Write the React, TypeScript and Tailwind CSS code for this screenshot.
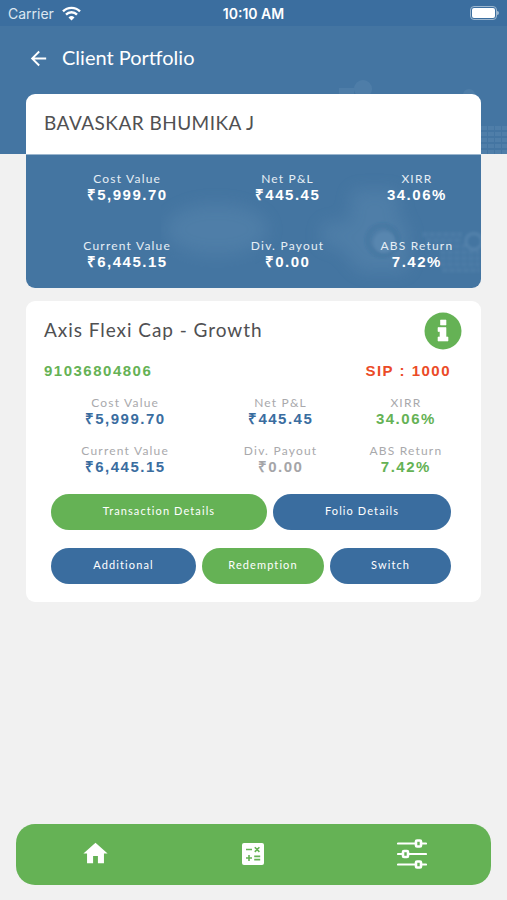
import type { ReactNode } from "react";
import { MdArrowBack, MdHome } from "react-icons/md";

type Metric = { label: string; value: string; tone?: string };

const summary: Metric[] = [
  { label: "Cost Value", value: "₹5,999.70" },
  { label: "Net P&L", value: "₹445.45" },
  { label: "XIRR", value: "34.06%" },
  { label: "Current Value", value: "₹6,445.15" },
  { label: "Div. Payout", value: "₹0.00" },
  { label: "ABS Return", value: "7.42%" },
];

const holding: Metric[] = [
  { label: "Cost Value", value: "₹5,999.70", tone: "text-[#3a6d9f]" },
  { label: "Net P&L", value: "₹445.45", tone: "text-[#3a6d9f]" },
  { label: "XIRR", value: "34.06%", tone: "text-[#65b255]" },
  { label: "Current Value", value: "₹6,445.15", tone: "text-[#3a6d9f]" },
  { label: "Div. Payout", value: "₹0.00", tone: "text-[#a5a5a8]" },
  { label: "ABS Return", value: "7.42%", tone: "text-[#65b255]" },
];

function MetricCell({ label, value, labelTone, valueTone }: { label: string; value: string; labelTone: string; valueTone: string }) {
  return (
    <div className="flex flex-col items-center whitespace-nowrap">
      <dt className={`text-[12px] leading-4 tracking-widest ${labelTone}`}>{label}</dt>
      <dd className={`font-['Liberation_Sans',sans-serif] text-[15px] leading-4 font-bold tracking-widest ${valueTone}`}>{value}</dd>
    </div>
  );
}

function Pill({ children, tone }: { children: ReactNode; tone: string }) {
  return (
    <button type="button" className={`h-9 rounded-full pb-0.5 text-[11px] tracking-widest whitespace-nowrap text-white ${tone}`}>
      {children}
    </button>
  );
}

function HeaderPattern() {
  return (
    <svg className="absolute top-0 right-0 h-full" width="254" height="128" viewBox="0 0 254 128" aria-hidden="true">
      <g fill="#8ab0cf" opacity="0.14">
        <circle cx="110" cy="63" r="9" />
        <path d="M86 62h15v8H86z" />
        <circle cx="216" cy="69" r="6" />
      </g>
      <g stroke="#8ab0cf" strokeWidth="4" strokeDasharray="6 1" opacity="0.16">
        <path d="M228 102h26M228 108h26M228 114h26M228 120h26M228 126h26" />
      </g>
    </svg>
  );
}

function SummaryPattern() {
  return (
    <svg className="absolute inset-y-0 right-0 h-full" width="320" height="134" viewBox="0 0 320 134" aria-hidden="true">
      <defs>
        <filter id="haze" x="-40%" y="-60%" width="180%" height="220%">
          <feGaussianBlur stdDeviation="9" />
        </filter>
        <filter id="soft" x="-20%" y="-20%" width="140%" height="140%">
          <feGaussianBlur stdDeviation="1" />
        </filter>
      </defs>
      <g fill="#8ab0cf" opacity="0.16" filter="url(#haze)">
        <ellipse cx="55" cy="75" rx="52" ry="26" />
        <path d="M160 68h88v50h-50l-20 -26h-18zM190 35h48v35h-48z" />
      </g>
      <g filter="url(#soft)">
        <circle cx="222" cy="86" r="15" fill="none" stroke="#2f648f" strokeWidth="6" opacity="0.18" />
        <circle cx="224" cy="88" r="11" fill="#9fc0da" opacity="0.12" />
        <g stroke="#8ab0cf" strokeWidth="5" strokeDasharray="6 1" opacity="0.1">
          <path d="M262 80h40M266 86h36M266 92h40M280 98h40M280 104h40M280 110h40M282 116h38" />
        </g>
        <circle cx="314" cy="87" r="8" fill="none" stroke="#9fc0da" strokeWidth="4" opacity="0.14" />
      </g>
    </svg>
  );
}

function WifiIcon() {
  return (
    <svg width="19" height="15" viewBox="0 0 19 15" fill="none" stroke="#fff" strokeWidth="2.400" aria-hidden="true">
      <path d="M1 5.400a12 12 0 0 1 17 0M4 8.600a7.700 7.700 0 0 1 11 0" />
      <path d="M9.500 14.500l-3 -3.100a4.300 4.300 0 0 1 6 0z" fill="#fff" stroke="none" />
    </svg>
  );
}

function InfoIcon() {
  return (
    <svg width="38" height="38" viewBox="0 0 38 38" aria-hidden="true">
      <circle cx="19" cy="19" r="18.500" fill="#65b255" />
      <path d="M16.500 8h5.500v5h-5.500zM14 15.500h8v9.500h2v4H14v-4h2v-5.500h-2z" fill="#fff" stroke="#fff" strokeWidth="0.600" strokeLinejoin="round" />
    </svg>
  );
}

function CalculatorIcon() {
  return (
    <svg width="24" height="24" viewBox="0 0 24 24" aria-hidden="true">
      <rect x="1" y="1" width="22" height="22" rx="2" fill="#fff" />
      <path d="M5 7.500h6M13.800 5.300l4.600 4.600M18.400 5.300l-4.600 4.600M5 16h6M8 13v6M13.200 14.400h6M13.200 17.600h6" stroke="#65b255" strokeWidth="1.600" />
    </svg>
  );
}

function SlidersIcon() {
  return (
    <svg width="30" height="30" viewBox="0 0 30 30" fill="none" stroke="#fff" aria-hidden="true">
      <path d="M1 4.500h17M25 4.500h4M1 15h4M12 15h17M1 25.500h17M25 25.500h4" strokeWidth="2.200" strokeLinecap="round" />
      <g strokeWidth="2.600">
        <rect x="19" y="1.500" width="5" height="6" rx="1" />
        <rect x="6" y="12" width="5" height="6" rx="1" />
        <rect x="19" y="22.500" width="5" height="6" rx="1" />
      </g>
    </svg>
  );
}

export default function App() {
  return (
    <div className="flex min-h-screen flex-col bg-[#f1f1f1] font-[Lato,sans-serif]">
      <div className="grid h-[26px] grid-cols-3 items-center bg-[#3b6e9f] px-2 font-[Inter,sans-serif] text-[14px] text-white">
        <div className="flex items-center gap-2 text-[#dce7f1]">
          <span>Carrier</span>
          <WifiIcon />
        </div>
        <time className="text-center font-semibold">10:10 AM</time>
        <div className="flex items-center justify-self-end" role="img" aria-label="Battery full">
          <span className="h-[14px] w-[27px] rounded-[4px] border border-[#9db7cf] p-px">
            <span className="block h-full rounded-[2px] bg-white" />
          </span>
          <span className="h-1 w-0.5 rounded-r bg-[#9db7cf]" />
        </div>
      </div>

      <header className="relative bg-[#4475a2]">
        <HeaderPattern />
        <div className="relative flex h-[68px] items-center gap-3 px-[27px] pb-1.5 text-white">
          <button type="button" aria-label="Back" className="pt-0.5">
            <MdArrowBack size={23} />
          </button>
          <h1 className="text-[20px] leading-6">Client Portfolio</h1>
        </div>
        <div className="relative mx-[26px] h-[60px] rounded-t-[9px] bg-white px-[18px] pt-[15px]">
          <h2 className="text-[19px] leading-7 tracking-wide text-[#505052]">BAVASKAR BHUMIKA J</h2>
        </div>
      </header>

      <main className="flex-1 px-[26px] pb-5">
        <section className="relative overflow-hidden rounded-b-[9px] border-t border-[#9bb6ce] bg-[#4475a1]">
          <SummaryPattern />
          <dl className="relative grid grid-cols-[162fr_158fr_100fr] gap-y-[35px] pt-4 pr-[14px] pb-[18px] pl-5">
            {summary.map((m) => (
              <MetricCell key={m.label} label={m.label} value={m.value} labelTone="text-[#e6eef5]" valueTone="text-white" />
            ))}
          </dl>
        </section>

        <section className="mt-[13px] rounded-[9px] bg-white pb-[18px]">
          <div className="flex items-center justify-between pt-[11px] pr-[19px] pl-[18px]">
            <h2 className="pb-0.5 text-[19px] leading-7 tracking-wider text-[#505052]">Axis Flexi Cap - Growth</h2>
            <button type="button" aria-label="Scheme information">
              <InfoIcon />
            </button>
          </div>
          <div className="flex justify-between pt-[11px] pr-[30px] pl-[18px] font-['Liberation_Sans',sans-serif] text-[15px] leading-5 font-bold tracking-widest">
            <span className="text-[#65b255]">91036804806</span>
            <span className="text-[#eb4b27]">SIP : 1000</span>
          </div>
          <dl className="grid grid-cols-[162fr_148fr_102fr] gap-y-4 pt-[14px] pr-6 pl-[18px]">
            {holding.map((m) => (
              <MetricCell key={m.label} label={m.label} value={m.value} labelTone="text-[#a9a9ac]" valueTone={m.tone ?? ""} />
            ))}
          </dl>
          <div className="mt-[19px] grid grid-cols-[216fr_178fr] gap-1.5 pr-[30px] pl-[25px]">
            <Pill tone="bg-[#65b255]">Transaction Details</Pill>
            <Pill tone="bg-[#3a6d9f]">Folio Details</Pill>
          </div>
          <div className="mt-[18px] grid grid-cols-[145fr_122fr_121fr] gap-1.5 pr-[30px] pl-[25px]">
            <Pill tone="bg-[#3a6d9f]">Additional</Pill>
            <Pill tone="bg-[#65b255]">Redemption</Pill>
            <Pill tone="bg-[#3a6d9f]">Switch</Pill>
          </div>
        </section>
      </main>

      <nav aria-label="Main" className="mx-4 mb-[15px] grid h-[61px] grid-cols-3 place-items-center rounded-[19px] bg-[#65b255] pb-0.5 text-white">
        <button type="button" aria-label="Home">
          <MdHome size={29} />
        </button>
        <button type="button" aria-label="Calculator">
          <CalculatorIcon />
        </button>
        <button type="button" aria-label="Options">
          <SlidersIcon />
        </button>
      </nav>
    </div>
  );
}
